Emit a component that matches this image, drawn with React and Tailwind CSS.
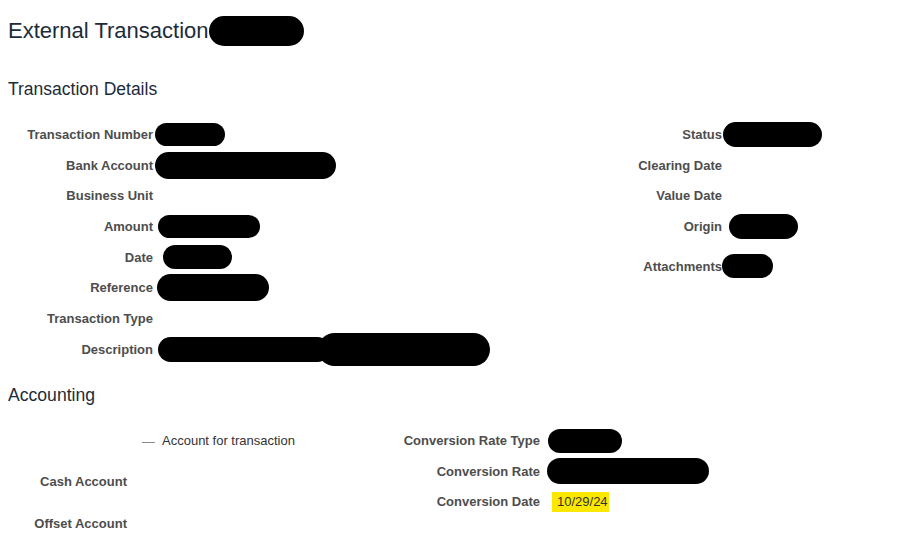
const Blot = ({ className = '' }) => (
  <span className={`block shrink-0 rounded-full bg-black ${className}`} />
);

const Label = ({ children, className = '' }) => (
  <div className={`shrink-0 text-right text-[13px] font-bold leading-none text-[#4d4d4d] ${className}`}>
    {children}
  </div>
);

const App = () => {
  const leftRows = [
    { label: 'Transaction Number', blot: <Blot className="ml-[2px] h-[23px] w-[70px]" /> },
    { label: 'Bank Account', blot: <Blot className="ml-[2px] h-[27px] w-[181px]" /> },
    { label: 'Business Unit' },
    { label: 'Amount', blot: <Blot className="ml-[5px] h-[23px] w-[102px]" /> },
    { label: 'Date', blot: <Blot className="ml-[10px] h-[24px] w-[69px]" /> },
    { label: 'Reference', blot: <Blot className="ml-[4px] h-[27px] w-[112px]" /> },
    { label: 'Transaction Type' },
    {
      label: 'Description',
      blot: (
        <div className="ml-[5px] flex items-center">
          <Blot className="h-[25px] w-[172px]" />
          <Blot className="-ml-[12px] h-[33px] w-[172px]" />
        </div>
      ),
    },
  ];

  const rightRows = [
    { label: 'Status', blot: <Blot className="ml-[1px] h-[25px] w-[99px]" /> },
    { label: 'Clearing Date' },
    { label: 'Value Date' },
    { label: 'Origin', blot: <Blot className="ml-[7px] h-[25px] w-[69px]" /> },
  ];

  return (
    <div className="min-h-screen bg-white font-['Liberation_Sans',Arial,sans-serif]">
      <div className="flex items-center pl-2 pt-[16px]">
        <h1 className="text-[22px] leading-[26px] text-[#1c2b39]">External Transaction</h1>
        <Blot className="h-[30px] w-[95px]" />
      </div>

      <h2 className="mt-[33px] pl-2 text-[17.5px] leading-[21px] text-[#1c2b39]">Transaction Details</h2>

      <div className="mt-[19px] flex">
        <div className="w-[572px]">
          {leftRows.map((row) => (
            <div key={row.label} className="flex h-[30.7px] items-center">
              <Label className="w-[153px]">{row.label}</Label>
              {row.blot}
            </div>
          ))}
        </div>
        <div>
          {rightRows.map((row) => (
            <div key={row.label} className="flex h-[30.7px] items-center">
              <Label className="w-[150px]">{row.label}</Label>
              {row.blot}
            </div>
          ))}
          <div className="mt-[9px] flex h-[30.7px] items-center">
            <Label className="w-[150px]">Attachments</Label>
            <Blot className="h-[24px] w-[51px]" />
          </div>
        </div>
      </div>

      <h2 className="mt-[20px] pl-2 text-[17.6px] leading-[21px] text-[#1c2b39]">Accounting</h2>

      <div className="mt-[20px] flex items-start">
        <div className="w-[390px]">
          <div className="flex h-[30.5px] items-center">
            <div className="w-[127px] shrink-0" />
            <span className="ml-[15px] mt-[4px] block h-px w-[13px] bg-[#8a8a8a]" />
            <span className="ml-[7px] text-[13px] leading-none text-[#333]">Account for transaction</span>
          </div>
          <div className="mt-[10.5px] flex h-[30.5px] items-center">
            <Label className="w-[127px]">Cash Account</Label>
          </div>
          <div className="mt-[11.5px] flex h-[30.5px] items-center">
            <Label className="w-[127px]">Offset Account</Label>
          </div>
        </div>
        <div>
          <div className="flex h-[30.5px] items-center">
            <Label className="w-[150px]">Conversion Rate Type</Label>
            <Blot className="ml-[8px] h-[24px] w-[74px]" />
          </div>
          <div className="flex h-[30.5px] items-center">
            <Label className="w-[150px]">Conversion Rate</Label>
            <Blot className="ml-[7px] h-[26px] w-[162px]" />
          </div>
          <div className="flex h-[30.5px] items-center">
            <Label className="w-[150px]">Conversion Date</Label>
            <span className="ml-[12px] flex h-[20px] items-center bg-[#fbe800] pl-[5px] pr-[1px] text-[13px] leading-none text-[#333]">
              10/29/24
            </span>
          </div>
        </div>
      </div>
    </div>
  );
};

export default App;
